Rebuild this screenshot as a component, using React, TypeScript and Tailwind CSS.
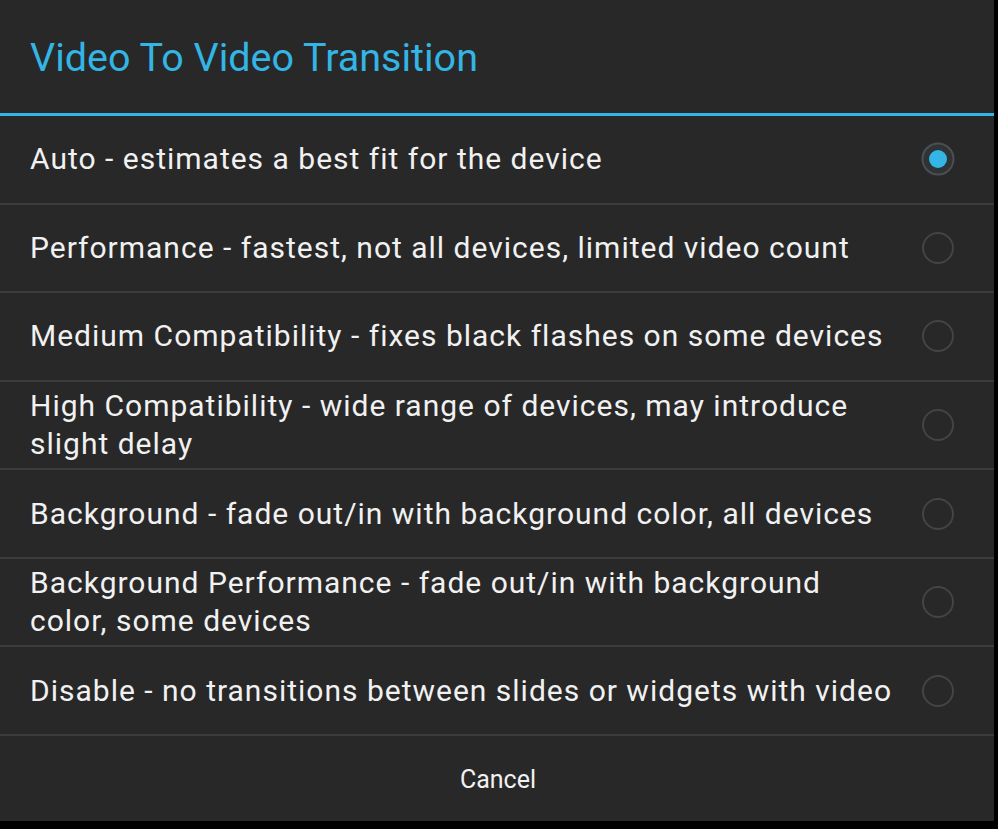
import React from "react";

const options = [
  "Auto - estimates a best fit for the device",
  "Performance - fastest, not all devices, limited video count",
  "Medium Compatibility - fixes black flashes on some devices",
  "High Compatibility - wide range of devices, may introduce slight delay",
  "Background - fade out/in with background color, all devices",
  "Background Performance - fade out/in with background color, some devices",
  "Disable - no transitions between slides or widgets with video",
];

function Radio({ checked }: { checked: boolean }) {
  return (
    <svg width="36" height="36" viewBox="0 0 36 36" className="shrink-0">
      {checked ? (
        <>
          <circle cx="18" cy="18" r="15.5" fill="#2f3335" stroke="#4b4f52" strokeWidth="2" />
          <circle cx="18" cy="18" r="9" fill="#33b5e5" />
        </>
      ) : (
        <circle cx="18" cy="18" r="15" fill="none" stroke="#444444" strokeWidth="2" />
      )}
    </svg>
  );
}

export default function App() {
  return (
    <div className="w-[998px] h-[829px] bg-black overflow-hidden" style={{ fontFamily: "Roboto, 'Noto Sans', sans-serif" }}>
      <div className="w-[994px] h-[821px] bg-[#282828] flex flex-col">
        <div className="h-[113px] flex items-center pl-[30px] shrink-0">
          <span className="text-[#33b5e5] text-[39.5px] leading-none pt-[3px]">Video To Video Transition</span>
        </div>
        <div className="h-[3px] bg-[#33b5e5] shrink-0" />
        {options.map((o, i) => (
          <div key={i} className="shrink-0">
            <div className="h-[86.57px] flex items-center pl-[30px] pr-[38px]">
              <span className="w-[870px] text-[#f1f1f1] text-[30px] leading-[38px] tracking-[1px]">{o}</span>
              <span className="flex-1" />
              <Radio checked={i === 0} />
            </div>
            <div className="h-[2px] bg-[#3c3c3c]" />
          </div>
        ))}
        <div className="flex-1 flex items-center justify-center">
          <span className="text-[#f1f1f1] text-[25px] leading-none pl-[2px] pt-[2px]">Cancel</span>
        </div>
      </div>
    </div>
  );
}
